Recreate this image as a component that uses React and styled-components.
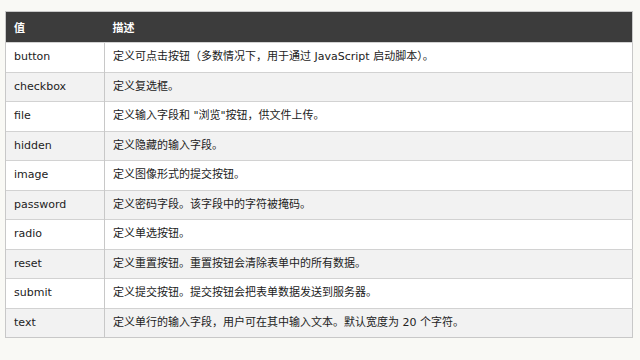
import React from "react";
import styled, { createGlobalStyle } from "styled-components";

const Global = createGlobalStyle`
  html, body { margin: 0; padding: 0; background: #f9f9f5; }
  body { font-family: "DejaVu Sans", "Noto Sans CJK SC", sans-serif; }
`;

const Page = styled.div`
  padding: 11px 7px 0 5px;
`;

const Table = styled.table`
  width: 628px;
  border-collapse: collapse;
  table-layout: fixed;
  font-size: 11px;
  color: #222;
  border: 1px solid #c8c8c8;
`;

const HeadCell = styled.th`
  background: #3c3c3c;
  color: #fff;
  font-weight: bold;
  text-align: left;
  height: 31px;
  padding: 0 0 0 8px;
  box-sizing: border-box;
  width: ${(p) => p.$w || "auto"};
`;

const Row = styled.tr`
  background: ${(p) => (p.$alt ? "#f2f2f2" : "#ffffff")};
`;

const Cell = styled.td`
  height: 29.5px;
  box-sizing: border-box;
  padding: 0 0 0 8px;
  border-top: 1px solid #d2d2d2;
  border-left: 1px solid #c8c8c8;
  line-height: 14px;
  white-space: nowrap;
`;

const rows = [
  ["button", "定义可点击按钮（多数情况下，用于通过 JavaScript 启动脚本）。"],
  ["checkbox", "定义复选框。"],
  ["file", "定义输入字段和 \"浏览\"按钮，供文件上传。"],
  ["hidden", "定义隐藏的输入字段。"],
  ["image", "定义图像形式的提交按钮。"],
  ["password", "定义密码字段。该字段中的字符被掩码。"],
  ["radio", "定义单选按钮。"],
  ["reset", "定义重置按钮。重置按钮会清除表单中的所有数据。"],
  ["submit", "定义提交按钮。提交按钮会把表单数据发送到服务器。"],
  ["text", "定义单行的输入字段，用户可在其中输入文本。默认宽度为 20 个字符。"],
];

export default function App() {
  return (
    <Page>
      <Global />
      <Table>
        <thead>
          <tr>
            <HeadCell $w="99px">值</HeadCell>
            <HeadCell>描述</HeadCell>
          </tr>
        </thead>
        <tbody>
          {rows.map(([v, d], i) => (
            <Row key={v} $alt={i % 2 === 1}>
              <Cell>{v}</Cell>
              <Cell>{d}</Cell>
            </Row>
          ))}
        </tbody>
      </Table>
    </Page>
  );
}
